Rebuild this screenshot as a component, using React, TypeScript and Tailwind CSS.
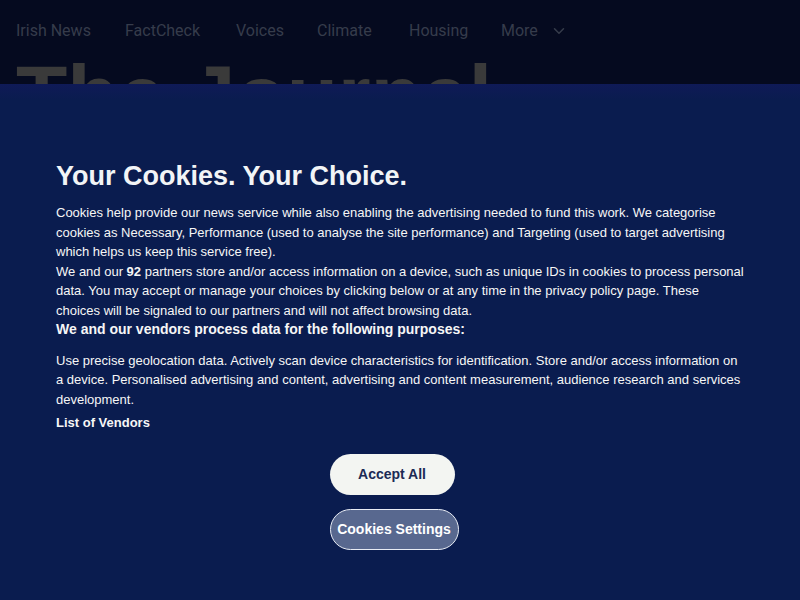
import { ChevronDown } from "lucide-react";

const NAV = [
  { label: "Irish News", w: "w-[109px]" },
  { label: "FactCheck", w: "w-[111px]" },
  { label: "Voices", w: "w-[81px]" },
  { label: "Climate", w: "w-[92px]" },
  { label: "Housing", w: "w-[92px]" },
];

function SiteBehind() {
  return (
    <div className="h-[84px] overflow-hidden bg-[#050a1f]">
      <nav className="flex items-center px-4 pt-[21px] text-[16px] text-[#363c4b] [font-family:Roboto,'Liberation_Sans',sans-serif]">
        {NAV.map((n) => (
          <span key={n.label} className={`${n.w} leading-5`}>{n.label}</span>
        ))}
        <span className="flex items-center gap-[12px] leading-5">
          More <ChevronDown size={18} strokeWidth={2} />
        </span>
      </nav>
      <div className="mt-[12px] pl-4 text-[84px] font-bold leading-none text-[#3a3a3a] [font-family:'Liberation_Sans',Arial,sans-serif]">
        The Journal
      </div>
    </div>
  );
}

export default function App() {
  return (
    <div className="h-[600px] w-[800px] overflow-hidden bg-[#050a1f] [font-family:'Liberation_Sans',Arial,sans-serif]">
      <SiteBehind />
      <div className="h-[516px] bg-[linear-gradient(#0f1a57_0px,#0a1c4f_16px)] px-[56px] pt-[76px] text-[#f6f6f6]">
        <h1 className="text-[27px] font-bold leading-8 text-[#f2f4f6]">Your Cookies. Your Choice.</h1>
        <div className="mt-[11px] text-[13px] leading-[19.6px]">
          <p>
            Cookies help provide our news service while also enabling the advertising needed to fund this work. We
            categorise cookies as Necessary, Performance (used to analyse the site performance) and Targeting (used
            to target advertising which helps us keep this service free).
          </p>
          <p>
            We and our <b>92</b> partners store and/or access information on a device, such as unique IDs in cookies
            to process personal data. You may accept or manage your choices by clicking below or at any time in the
            privacy policy page. These choices will be signaled to our partners and will not affect browsing data.
          </p>
          <h2 className="text-[14px] font-bold leading-[17px]">We and our vendors process data for the following purposes:</h2>
          <p className="mt-[13px]">
            Use precise geolocation data. Actively scan device characteristics for identification. Store and/or access
            information on a device. Personalised advertising and content, advertising and content measurement,
            audience research and services development.
          </p>
          <p className="mt-[4px] font-bold">List of Vendors</p>
        </div>
        <div className="mx-auto mt-[21px] flex w-fit translate-x-[-6px] flex-col items-start gap-[14px]">
          <button className="h-[41px] w-[125px] rounded-full bg-[#f3f5f2] text-[14px] font-bold text-[#1c2a55]">
            Accept All
          </button>
          <button className="h-[41px] w-[129px] rounded-full border border-[#e8ecf4] bg-[#58688f] text-[14px] font-bold text-white">
            Cookies Settings
          </button>
        </div>
      </div>
    </div>
  );
}
